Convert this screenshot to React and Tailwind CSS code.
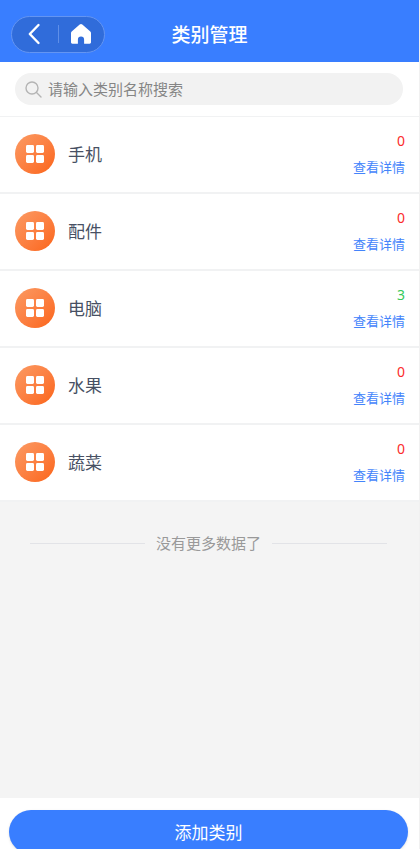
import React, { useState } from "react";

const categories = [
  { id: 1, name: "手机", count: 0 },
  { id: 2, name: "配件", count: 0 },
  { id: 3, name: "电脑", count: 3 },
  { id: 4, name: "水果", count: 0 },
  { id: 5, name: "蔬菜", count: 0 },
];

const Header = () => (
  <header className="grid grid-cols-[1fr_auto_1fr] items-center h-[62px] shrink-0 pt-[6px] px-[11px] bg-[#397eff]">
    <div className="flex items-center w-[94px] h-[37px] rounded-full border border-[#6495f2] bg-[#306cda]">
      <button type="button" aria-label="返回" className="flex flex-1 justify-center items-center h-full">
        <svg width="14" height="22" viewBox="0 0 14 22" fill="none" stroke="#fff" strokeWidth="2.4">
          <path d="M10.5 2 1.8 11l8.7 9" strokeLinecap="round" strokeLinejoin="round" />
        </svg>
      </button>
      <span className="w-px h-[18px] bg-[#5f8fe8]" />
      <button type="button" aria-label="首页" className="flex flex-1 justify-center items-center h-full">
        <svg width="22" height="22" viewBox="0 0 22 22" fill="#fff">
          <path d="M9.7 1.5a2 2 0 0 1 2.6 0l8 7.1c.5.5.7.9.7 1.5v9.2c0 .9-.5 1.4-1.4 1.4h-5.5v-4a3.1 3.1 0 0 0-6.2 0v4H2.4c-.9 0-1.4-.5-1.4-1.4v-9.2c0-.6.2-1 .7-1.5z" />
        </svg>
      </button>
    </div>
    <h1 className="text-[19px] leading-7 font-medium text-white">类别管理</h1>
  </header>
);

const CategoryIcon = () => (
  <span className="flex justify-center items-center w-10 h-10 rounded-full bg-linear-to-br from-[#fb9a62] to-[#fb6412]">
    <svg width="18" height="18" viewBox="0 0 18 18" fill="#fff">
      <rect x="0" y="0" width="8" height="8" rx="1.4" />
      <rect x="10" y="0" width="8" height="8" rx="1.4" />
      <rect x="0" y="10" width="8" height="8" rx="1.4" />
      <rect x="10" y="10" width="8" height="8" rx="1.4" />
    </svg>
  </span>
);

const CategoryRow = ({ category }) => (
  <li className="flex items-center h-[77px] pb-px pl-[15px] pr-[14px] bg-white border-b-2 border-[#f1f2f3]">
    <CategoryIcon />
    <span className="flex-1 ml-[13px] text-[17px] leading-6 text-[#475063]">{category.name}</span>
    <div className="flex flex-col items-end gap-[6px] text-[13px] leading-5">
      <span className={category.count > 0 ? "font-['Noto_Sans',sans-serif] text-sm text-[#35c95a]" : "font-['Noto_Sans',sans-serif] text-sm text-[#fb2b2b]"}>
        {category.count}
      </span>
      <a href="#detail" className="text-[#4384fb]">查看详情</a>
    </div>
  </li>
);

const App = () => {
  const [keyword, setKeyword] = useState("");
  const list = categories.filter((item) => item.name.includes(keyword));

  return (
    <div className="flex flex-col h-screen overflow-hidden border-r border-[#f1f1f1] bg-[#f4f4f4] font-['Noto_Sans_CJK_SC','Noto_Sans',sans-serif]">
      <Header />
      <div className="shrink-0 pt-[11px] pb-[11px] pl-[15px] pr-4 bg-white border-b border-[#f1f2f3]">
        <label className="flex items-center gap-[6px] h-8 pl-[10px] pr-4 rounded-full bg-[#f2f2f2]">
          <svg width="17" height="17" viewBox="0 0 17 17" fill="none" stroke="#b4b4b4" strokeWidth="1.4">
            <circle cx="7" cy="7" r="6" />
            <path d="m11.5 11.5 4.5 4.5" strokeLinecap="round" />
          </svg>
          <input
            type="text"
            aria-label="搜索类别"
            placeholder="请输入类别名称搜索"
            value={keyword}
            onChange={(e) => setKeyword(e.target.value)}
            className="flex-1 min-w-0 bg-transparent text-[15px] leading-6 text-[#333] outline-none placeholder:text-[#858585]"
          />
        </label>
      </div>
      <main className="flex-1 overflow-hidden">
        <ul>
          {list.map((item) => (
            <CategoryRow key={item.id} category={item} />
          ))}
        </ul>
        <div className="flex items-center gap-[11px] pl-[30px] pr-8 pt-[29px] text-[15px] leading-6 text-[#999]">
          <span className="flex-1 h-px bg-[#e2e3e7]" />
          没有更多数据了
          <span className="flex-1 h-px bg-[#e2e3e7]" />
        </div>
      </main>
      <footer className="shrink-0 h-[51px] pt-3 pl-[9px] pr-[11px] bg-white">
        <button type="button" className="w-full h-11 pb-px rounded-full bg-[#397eff] text-[17px] text-white shadow-sm">
          添加类别
        </button>
      </footer>
    </div>
  );
};

export default App;
